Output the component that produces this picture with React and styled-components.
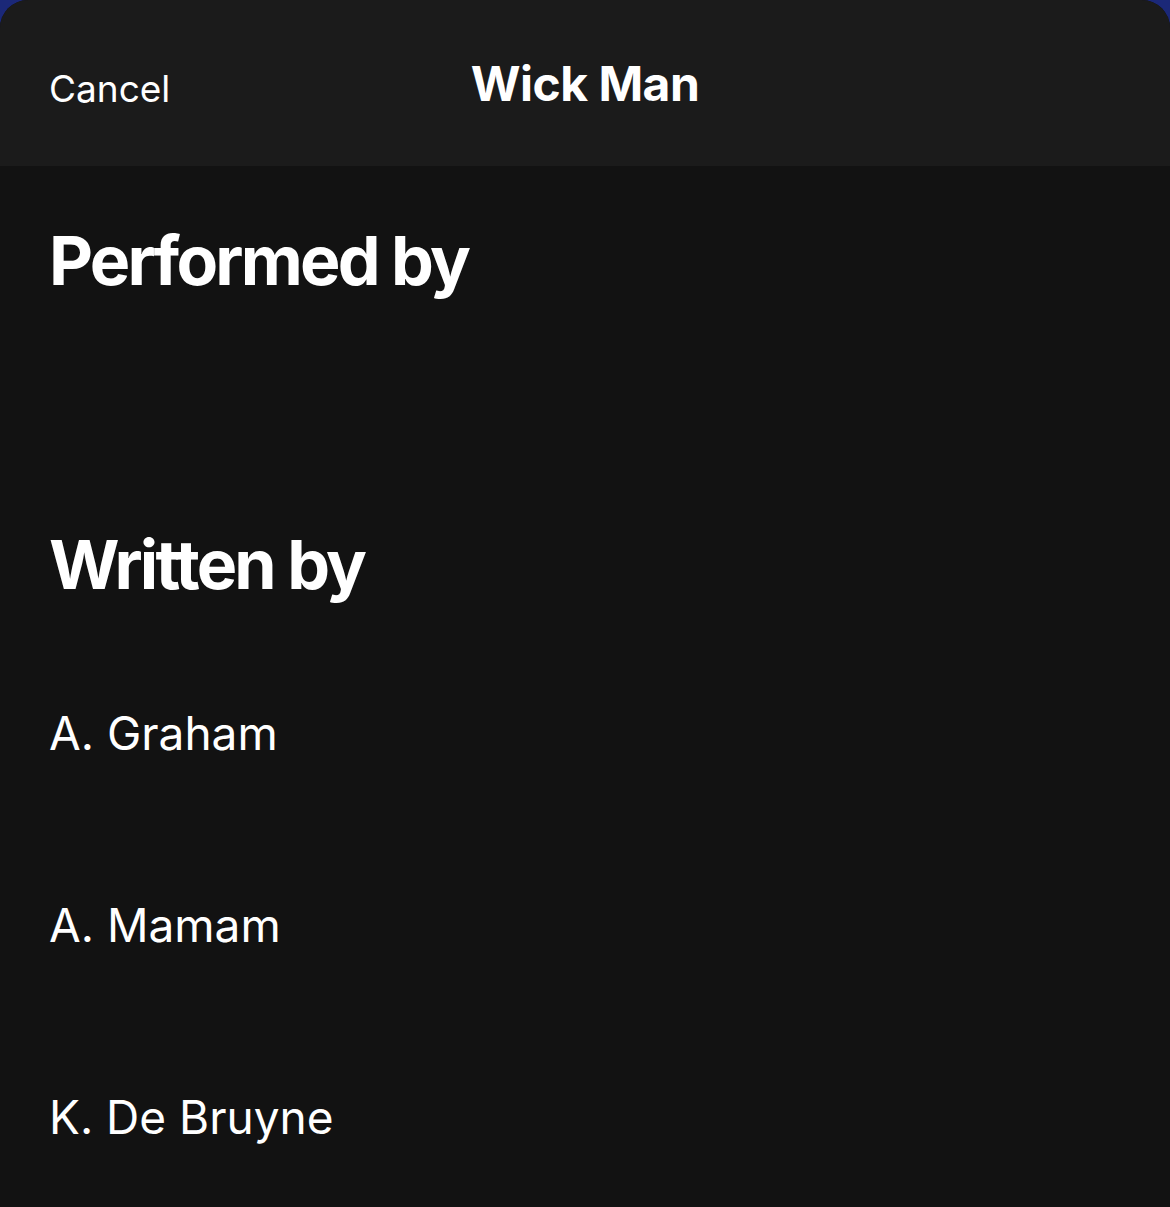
import React from "react";
import styled, { createGlobalStyle } from "styled-components";

const GlobalStyle = createGlobalStyle`
  html, body {
    margin: 0;
    padding: 0;
    background: #1b2878;
  }
  body {
    font-family: Inter, "Noto Sans", sans-serif;
    -webkit-font-smoothing: antialiased;
  }
`;

const Sheet = styled.div`
  min-height: 1207px;
  background: #121212;
  border-radius: 28px 28px 0 0;
  overflow: hidden;
  color: #ffffff;
`;

const Header = styled.header`
  height: 166px;
  background: #1b1b1b;
  display: grid;
  grid-template-columns: 1fr auto 1fr;
  align-items: center;
  padding: 0 49px;
  box-sizing: border-box;
`;

const Cancel = styled.button`
  justify-self: start;
  background: none;
  border: 0;
  padding: 0;
  margin-top: 10px;
  color: #ffffff;
  font-family: inherit;
  font-size: 37px;
  font-weight: 400;
  cursor: pointer;
`;

const Title = styled.h1`
  margin: 0;
  font-size: 48px;
  font-weight: 700;
  letter-spacing: -0.5px;
`;

const Body = styled.main`
  padding: 0 49px;
`;

const Section = styled.section`
  padding-top: ${({ $top }) => $top}px;
`;

const Heading = styled.h2`
  margin: 0;
  font-size: 68px;
  line-height: 70px;
  font-weight: 700;
  letter-spacing: -2.8px;
`;

const Credits = styled.ul`
  list-style: none;
  margin: 0;
  padding: 0;
`;

const Credit = styled.li`
  font-size: 46px;
  line-height: 46px;
  height: 46px;
  margin-top: ${({ $first }) => ($first ? 111 : 146)}px;
`;

const writers = ["A. Graham", "A. Mamam", "K. De Bruyne"];

export default function App() {
  return (
    <>
      <GlobalStyle />
      <Sheet>
        <Header>
          <Cancel>Cancel</Cancel>
          <Title>Wick Man</Title>
          <span />
        </Header>
        <Body>
          <Section $top={59}>
            <Heading>Performed by</Heading>
          </Section>
          <Section $top={234}>
            <Heading>Written by</Heading>
            <Credits>
              {writers.map((name, i) => (
                <Credit key={name} $first={i === 0}>
                  {name}
                </Credit>
              ))}
            </Credits>
          </Section>
        </Body>
      </Sheet>
    </>
  );
}
